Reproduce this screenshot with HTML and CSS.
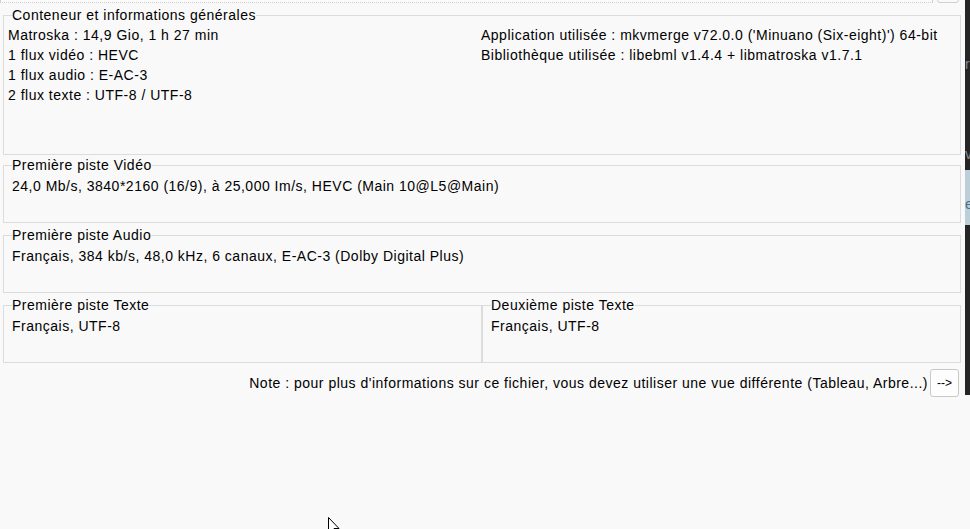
FILE: index.html
```html
<!DOCTYPE html>
<html lang="fr">
<head>
  <meta charset="UTF-8" />
  <title>MediaInfo</title>
  <link rel="stylesheet" href="styles.css">
</head>
<body>

  <div class="window">
    <div class="main">
      <div class="topbar">
        <div class="path-input"></div>
        <div class="path-btn"></div>
      </div>

      <fieldset class="group general">
        <legend>Conteneur et informations générales</legend>
        <div class="general-grid">
          <div>
            <div>Matroska : 14,9 Gio, 1 h 27 min</div>
            <div>1 flux vidéo : HEVC</div>
            <div>1 flux audio : E-AC-3</div>
            <div>2 flux texte : UTF-8 / UTF-8</div>
          </div>
          <div>
            <div>Application utilisée : mkvmerge v72.0.0 ('Minuano (Six-eight)') 64-bit</div>
            <div>Bibliothèque utilisée : libebml v1.4.4 + libmatroska v1.7.1</div>
          </div>
        </div>
      </fieldset>

      <fieldset class="group">
        <legend>Première piste Vidéo</legend>
        <div class="track">24,0 Mb/s, 3840*2160 (16/9), à 25,000 Im/s, HEVC (Main 10@L5@Main)</div>
      </fieldset>

      <fieldset class="group">
        <legend>Première piste Audio</legend>
        <div class="track">Français, 384 kb/s, 48,0 kHz, 6 canaux, E-AC-3 (Dolby Digital Plus)</div>
      </fieldset>

      <div class="text-row">
        <fieldset class="group">
          <legend>Première piste Texte</legend>
          <div class="track">Français, UTF-8</div>
        </fieldset>
        <fieldset class="group">
          <legend>Deuxième piste Texte</legend>
          <div class="track">Français, UTF-8</div>
        </fieldset>
      </div>

      <div class="note">
        <span>Note : pour plus d'informations sur ce fichier, vous devez utiliser une vue différente (Tableau, Arbre...)</span>
        <button class="next-btn">--&gt;</button>
      </div>
    </div>

    <!-- edge of the window behind -->
    <div class="side">
      <span class="side-char c1">r</span>
      <span class="side-char c2">v</span>
      <div class="side-sel"><span class="side-char">e</span></div>
    </div>
  </div>

  <svg class="cursor" width="12" height="19" viewBox="0 0 12 19">
    <path d="M0.5 0.5 L0.5 16 L4 12.5 L6.5 18 L8.5 17 L6 11.5 L11 11.5 Z" fill="#fff" stroke="#000" stroke-width="1"/>
  </svg>

</body>
</html>
```

FILE: styles.css
```css
body {
  margin: 0;
  background: #f9f9f9;
  color: #000;
  font-family: "Liberation Sans", Arial, sans-serif;
  font-size: 14px;
  letter-spacing: 0.5px;
  overflow: hidden;
}

.window {
  display: flex;
  align-items: flex-start;
}

.main {
  flex: 1;
}

.topbar {
  display: flex;
  height: 23px;
  margin-top: -20px;
}

.path-input {
  flex: 1;
  border: 1px solid #d0d0d0;
  border-bottom-style: dotted;
  background: #fafafa;
  margin-right: 4px;
}

.path-btn {
  width: 20px;
  border: 1px solid #d0d0d0;
  border-radius: 3px;
  margin-right: 6px;
}

.group {
  margin: 0 4px 4px 3px;
  padding: 3px 8px 0;
  border: 1px solid #dcdcdc;
  min-width: 0;
}

.group legend {
  padding: 0;
  line-height: 16px;
}

.track {
  height: 46px;
  line-height: 20px;
}

.general {
  margin-top: 4px;
  margin-bottom: 2px;
  padding: 2px 4px 2px;
}

.general legend {
  margin-left: 4px;
}

.general-grid {
  display: grid;
  grid-template-columns: 473px 1fr;
  height: 127px;
  line-height: 20px;
}

.text-row {
  display: flex;
  margin: 0 4px 0 3px;
}

.text-row .group {
  flex: 1;
  margin: 0 0 4px;
}

.note {
  display: flex;
  justify-content: flex-end;
  align-items: center;
  gap: 2px;
  margin: 2px 6px 0 0;
}

.next-btn {
  width: 29px;
  height: 28px;
  padding: 0;
  background: #fdfdfd;
  border: 1px solid #c9c9c9;
  border-radius: 3px;
  font: 12px "Liberation Sans", Arial, sans-serif;
  color: #000;
}

.side {
  width: 5px;
  height: 395px;
  background: #252526;
  overflow: hidden;
  position: relative;
}

.side-char {
  position: absolute;
  left: 0;
  color: #8a8a8a;
  font-size: 14px;
  letter-spacing: 0;
}

.c1 { top: 56px; }
.c2 { top: 146px; }

.side-sel {
  position: absolute;
  top: 170px;
  left: 0;
  width: 5px;
  height: 55px;
  background: #bccfd9;
}

.side-sel .side-char {
  top: 26px;
  color: #4a7088;
}

.cursor {
  position: absolute;
  left: 328px;
  top: 517px;
}
```
